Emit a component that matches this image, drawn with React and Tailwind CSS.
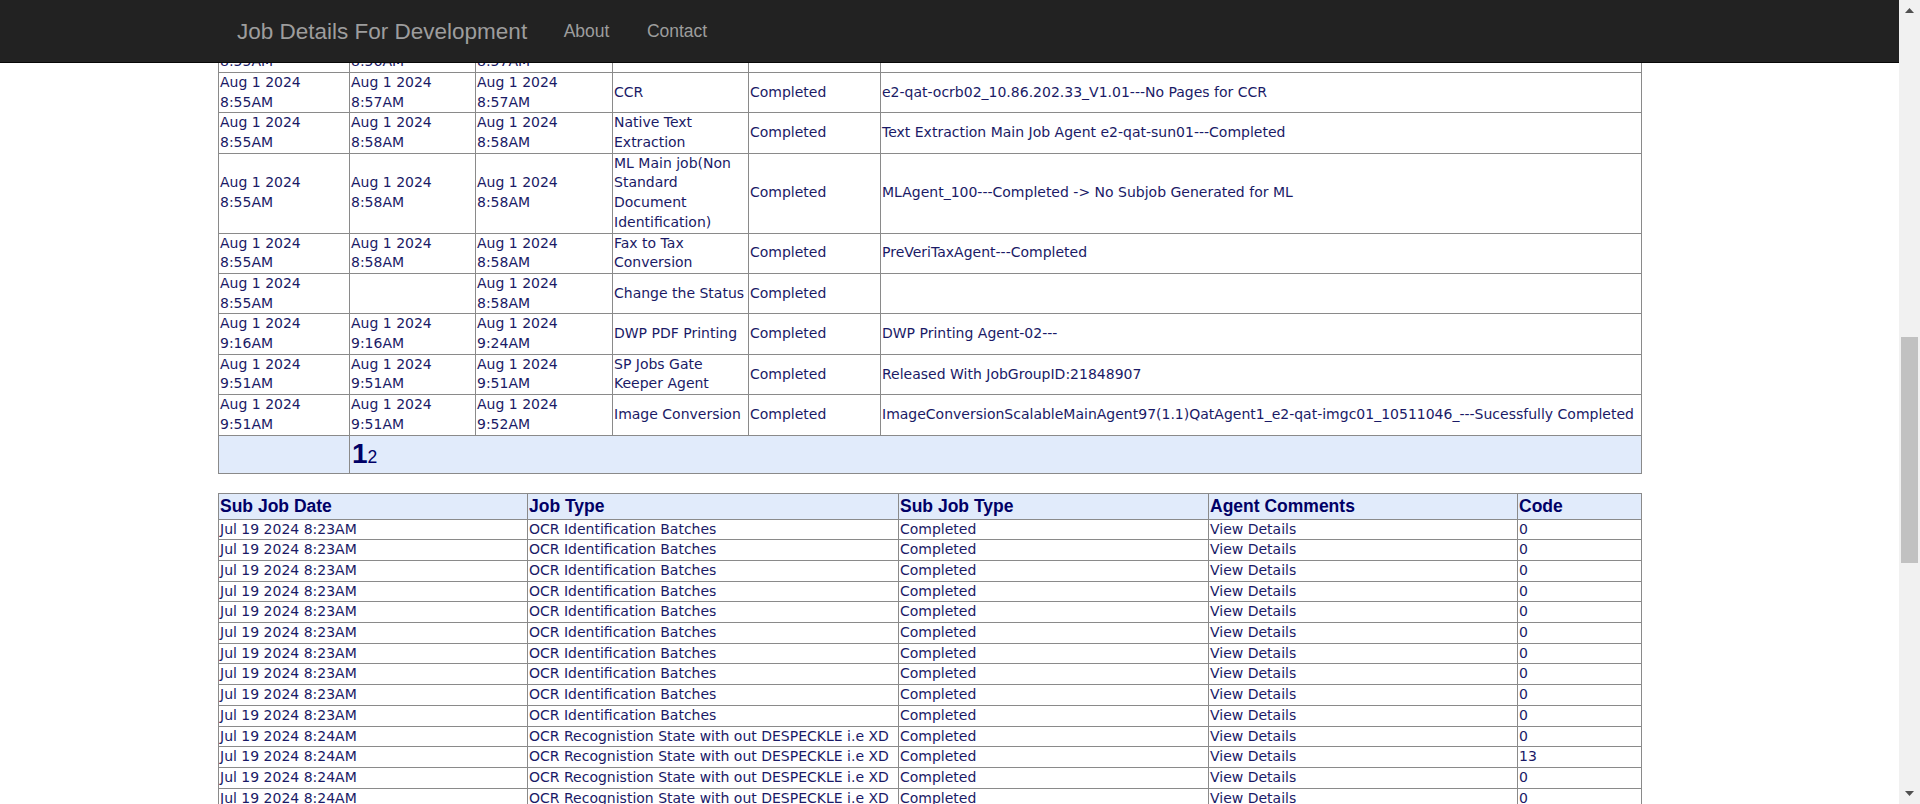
import React from "react";

const jobRows = [
  { start: ["Aug 1 2024", "8:55AM"], pick: ["Aug 1 2024", "8:56AM"], end: ["Aug 1 2024", "8:57AM"], type: ["OCR Recognition"], status: "Completed", comment: "" },
  { start: ["Aug 1 2024", "8:55AM"], pick: ["Aug 1 2024", "8:57AM"], end: ["Aug 1 2024", "8:57AM"], type: ["CCR"], status: "Completed", comment: "e2-qat-ocrb02_10.86.202.33_V1.01---No Pages for CCR" },
  { start: ["Aug 1 2024", "8:55AM"], pick: ["Aug 1 2024", "8:58AM"], end: ["Aug 1 2024", "8:58AM"], type: ["Native Text", "Extraction"], status: "Completed", comment: "Text Extraction Main Job Agent e2-qat-sun01---Completed" },
  { start: ["Aug 1 2024", "8:55AM"], pick: ["Aug 1 2024", "8:58AM"], end: ["Aug 1 2024", "8:58AM"], type: ["ML Main job(Non", "Standard", "Document", "Identification)"], status: "Completed", comment: "MLAgent_100---Completed -> No Subjob Generated for ML" },
  { start: ["Aug 1 2024", "8:55AM"], pick: ["Aug 1 2024", "8:58AM"], end: ["Aug 1 2024", "8:58AM"], type: ["Fax to Tax", "Conversion"], status: "Completed", comment: "PreVeriTaxAgent---Completed" },
  { start: ["Aug 1 2024", "8:55AM"], pick: [], end: ["Aug 1 2024", "8:58AM"], type: ["Change the Status"], status: "Completed", comment: "" },
  { start: ["Aug 1 2024", "9:16AM"], pick: ["Aug 1 2024", "9:16AM"], end: ["Aug 1 2024", "9:24AM"], type: ["DWP PDF Printing"], status: "Completed", comment: "DWP Printing Agent-02---" },
  { start: ["Aug 1 2024", "9:51AM"], pick: ["Aug 1 2024", "9:51AM"], end: ["Aug 1 2024", "9:51AM"], type: ["SP Jobs Gate", "Keeper Agent"], status: "Completed", comment: "Released With JobGroupID:21848907" },
  { start: ["Aug 1 2024", "9:51AM"], pick: ["Aug 1 2024", "9:51AM"], end: ["Aug 1 2024", "9:52AM"], type: ["Image Conversion"], status: "Completed", comment: "ImageConversionScalableMainAgent97(1.1)QatAgent1_e2-qat-imgc01_10511046_---Sucessfully Completed" },
];

const subRows = [
  ...Array(10).fill(["Jul 19 2024 8:23AM", "OCR Identification Batches", "0"]),
  ["Jul 19 2024 8:24AM", "OCR Recognistion State with out DESPECKLE i.e XD", "0"],
  ["Jul 19 2024 8:24AM", "OCR Recognistion State with out DESPECKLE i.e XD", "13"],
  ["Jul 19 2024 8:24AM", "OCR Recognistion State with out DESPECKLE i.e XD", "0"],
  ["Jul 19 2024 8:24AM", "OCR Recognistion State with out DESPECKLE i.e XD", "0"],
  ["Jul 19 2024 8:24AM", "OCR Recognistion State with out DESPECKLE i.e XD", "0"],
];

const td = "border border-[#8a8a8a] px-[1px] py-0 align-middle whitespace-nowrap";

function Lines({ lines }) {
  return lines.map((l, i) => (
    <React.Fragment key={i}>
      {i > 0 && <br />}
      {l}
    </React.Fragment>
  ));
}

function Scrollbar() {
  return (
    <div className="w-[21px] h-full bg-[#f1f1f1] flex flex-col">
      <div className="h-[21px] flex items-center justify-center">
        <svg width="9" height="5" viewBox="0 0 9 5"><path d="M0 5 L4.5 0 L9 5 Z" fill="#505050" /></svg>
      </div>
      <div className="h-[316px]" />
      <div className="h-[226px] mx-[2px] bg-[#c1c1c1]" />
      <div className="flex-1" />
      <div className="h-[21px] flex items-center justify-center">
        <svg width="9" height="5" viewBox="0 0 9 5"><path d="M0 0 L9 0 L4.5 5 Z" fill="#505050" /></svg>
      </div>
    </div>
  );
}

export default function App() {
  return (
    <div className="flex h-[804px] w-full overflow-hidden bg-white">
      <div className="relative flex-1 h-full overflow-hidden">
        <div className="pt-[31.5px] pl-[218px] font-['DejaVu_Sans',sans-serif] text-[14px] leading-[19.7px] text-[#1a1a66]">
          <table className="w-[1423px] table-fixed border-collapse">
            <colgroup>
              <col className="w-[131px]" />
              <col className="w-[126px]" />
              <col className="w-[137px]" />
              <col className="w-[136px]" />
              <col className="w-[132px]" />
              <col className="w-[761px]" />
            </colgroup>
            <tbody>
              {jobRows.map((r, i) => (
                <tr key={i}>
                  <td className={td}><Lines lines={r.start} /></td>
                  <td className={td}><Lines lines={r.pick} /></td>
                  <td className={td}><Lines lines={r.end} /></td>
                  <td className={td}><Lines lines={r.type} /></td>
                  <td className={td}>{r.status}</td>
                  <td className={td}>{r.comment}</td>
                </tr>
              ))}
              <tr className="bg-[#e1ebfb]">
                <td className={`${td} h-[38px]`} />
                <td colSpan={5} className={`${td} h-[38px] px-[2px] text-[#000066] font-['Liberation_Sans',Arial,sans-serif]`}>
                  <span className="text-[28px] font-bold leading-[28px]">1</span>
                  <span className="text-[17.5px]">2</span>
                </td>
              </tr>
            </tbody>
          </table>

          <table className="mt-[19px] w-[1423px] table-fixed border-collapse">
            <colgroup>
              <col className="w-[309px]" />
              <col className="w-[371px]" />
              <col className="w-[310px]" />
              <col className="w-[309px]" />
              <col className="w-[124px]" />
            </colgroup>
            <thead>
              <tr className="bg-[#e1ebfb] text-left font-['Liberation_Sans',Arial,sans-serif] text-[17.5px] leading-[25px] font-bold text-[#000066]">
                {["Sub Job Date", "Job Type", "Sub Job Type", "Agent Comments", "Code"].map((h) => (
                  <th key={h} className={`${td} font-bold`}>{h}</th>
                ))}
              </tr>
            </thead>
            <tbody>
              {subRows.map((r, i) => (
                <tr key={i}>
                  <td className={td}>{r[0]}</td>
                  <td className={td}>{r[1]}</td>
                  <td className={td}>Completed</td>
                  <td className={td}>View Details</td>
                  <td className={td}>{r[2]}</td>
                </tr>
              ))}
            </tbody>
          </table>
        </div>

        <div className="absolute inset-x-0 top-0 h-[63px] bg-[#222222] border-b border-[#080808] flex items-center font-['Liberation_Sans',Arial,sans-serif] text-[#9d9d9d]">
          <span className="ml-[237px] text-[22.5px] leading-[25px]">Job Details For Development</span>
          <nav className="ml-[36.5px] flex gap-[37.5px] text-[17.5px] leading-[25px]">
            <span>About</span>
            <span>Contact</span>
          </nav>
        </div>
      </div>
      <Scrollbar />
    </div>
  );
}
